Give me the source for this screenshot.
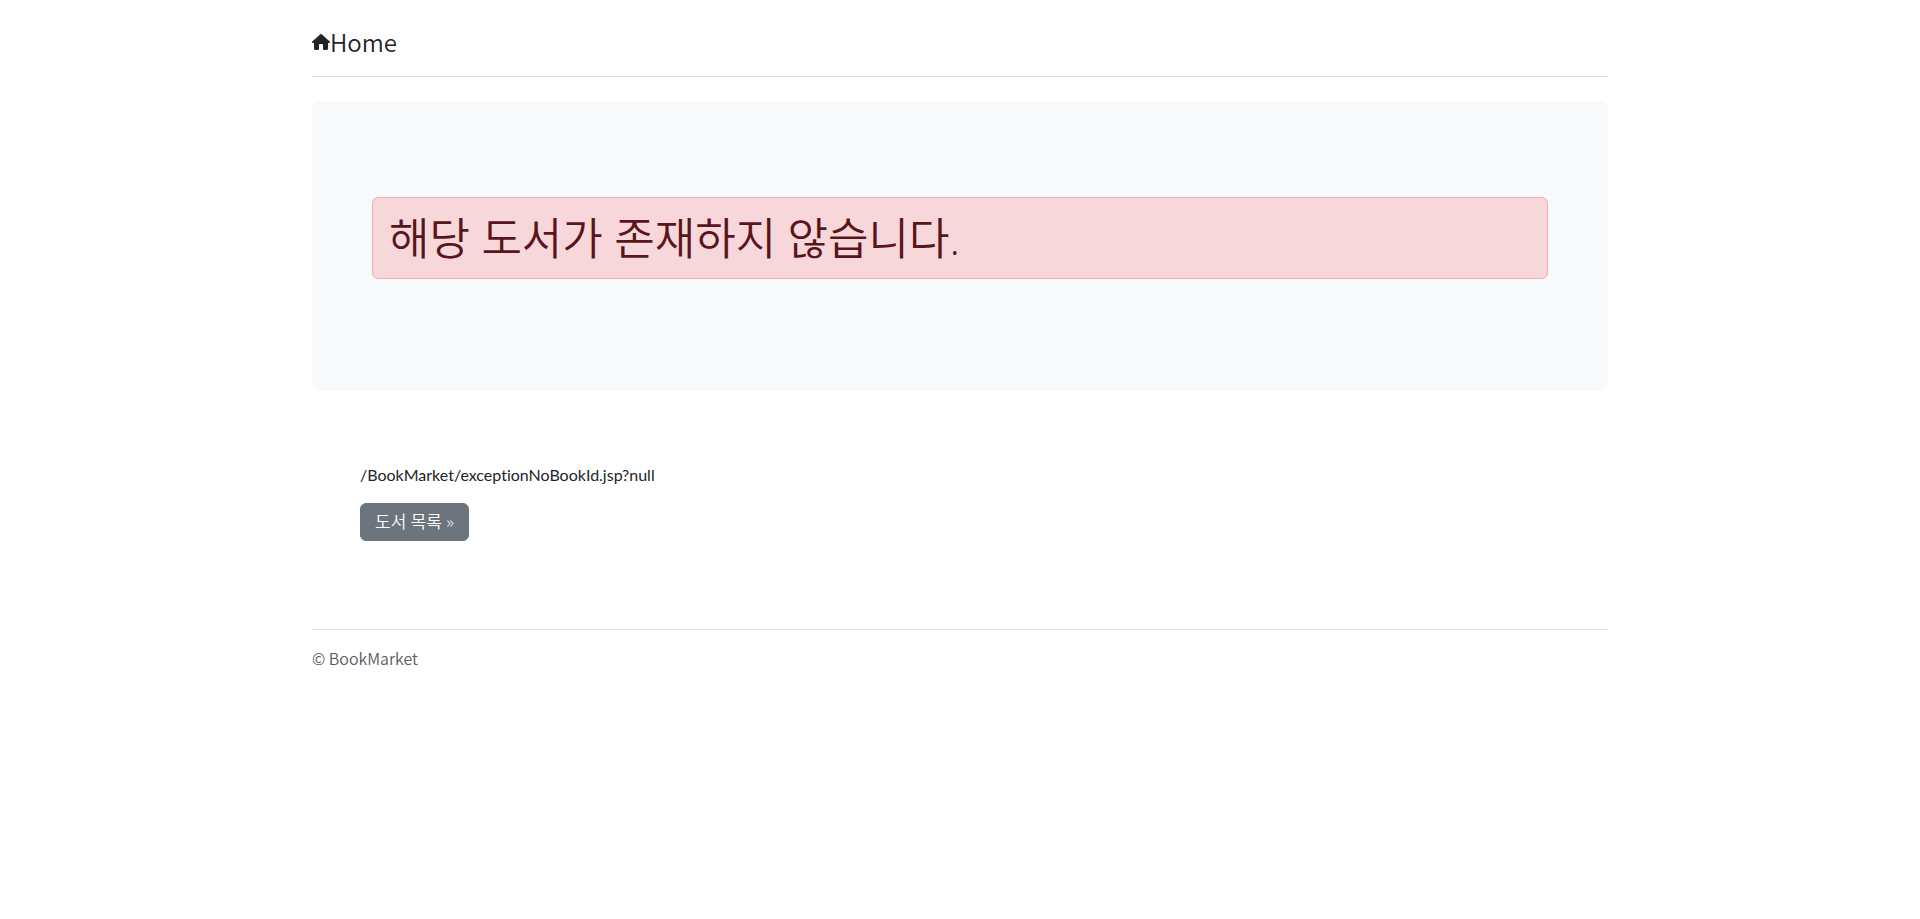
<div class="container">
  <header>
    <a href="./welcome.jsp">
      <svg width="18" height="16" viewBox="0 0 18 16" fill="currentColor" aria-hidden="true">
        <path d="M8.3.3a1 1 0 0 1 1.4 0l8 7.1c.6.6.3 1.6-.7 1.6h-1v5.5a1.5 1.5 0 0 1-1.5 1.5H12a1 1 0 0 1-1-1v-4a1 1 0 0 0-1-1H8a1 1 0 0 0-1 1v4a1 1 0 0 1-1 1H3.500A1.500 1.500 0 0 1 2 14.500V9H1C0 9-.3 8 .3 7.400z" />
      </svg>
      <span>Home</span>
    </a>
  </header>

  <main>
    <section class="hero">
      <h2 class="alert">해당 도서가 존재하지 않습니다.</h2>
    </section>
    <section class="details">
      <p class="path">/BookMarket/exceptionNoBookId.jsp?null</p>
      <p><a class="button" href="./books.jsp">도서 목록 »</a></p>
    </section>
  </main>

  <footer>© BookMarket</footer>
</div>

<style>
  :global(body) {
    background: #fff;
    color: #212529;
    font-family: "Noto Sans CJK KR", sans-serif;
    font-size: 16px;
    font-weight: 350;
    line-height: 24px;
  }
  .container {
    box-sizing: border-box;
    max-width: 1320px;
    margin: 0 auto;
    padding: 24px 12px;
  }
  header {
    padding-bottom: 16px;
    margin-bottom: 24px;
    border-bottom: 1px solid #dee2e6;
  }
  header a {
    display: flex;
    align-items: center;
    color: inherit;
    text-decoration: none;
    font-size: 24px;
    line-height: 36px;
  }
  .hero {
    padding: 96px 60px;
    margin-bottom: 24px;
    border-radius: 8px;
    background: #f8f9fa;
  }
  .alert {
    margin: 0 0 16px;
    padding: 16px;
    border: 1px solid #f1aeb5;
    border-radius: 6px;
    background: #f8d7da;
    color: #58151c;
    font-family: "Open Sans", "Noto Sans CJK KR", sans-serif;
    font-size: 44px;
    font-weight: 350;
    line-height: 48px;
  }
  .details {
    padding: 48px;
    margin-bottom: 24px;
  }
  p {
    margin: 0 0 16px;
  }
  .path {
    font-family: Lato, sans-serif;
    font-weight: 400;
    font-variant-ligatures: none;
  }
  .button {
    display: inline-block;
    padding: 6px 14px;
    border: 1px solid #6c757d;
    border-radius: 6px;
    background: #6c757d;
    color: #fff;
    font-family: "Open Sans", "Noto Sans CJK KR", sans-serif;
    font-size: 17px;
    text-decoration: none;
  }
  footer {
    padding-top: 16px;
    border-top: 1px solid #dee2e6;
    color: #585c5f;
  }
</style>
